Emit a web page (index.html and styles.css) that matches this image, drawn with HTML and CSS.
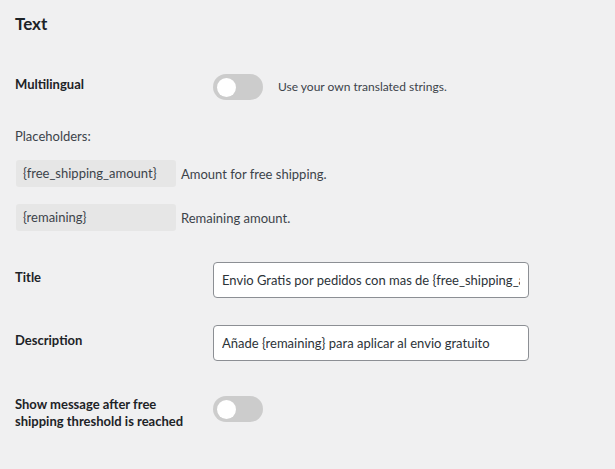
FILE: index.html
```html
<!DOCTYPE html>
<html>
<head>
<meta charset="utf-8">
<link rel="stylesheet" href="styles.css">
</head>
<body>
<div class="page">
  <h2 class="heading">Text</h2>

  <div class="row row-multi">
    <div class="label">Multilingual</div>
    <div class="field">
      <span class="toggle"><span class="knob"></span></span>
      <span class="desc">Use your own translated strings.</span>
    </div>
  </div>

  <div class="ph-title">Placeholders:</div>
  <div class="ph-row ph-first">
    <span class="ph-box">{free_shipping_amount}</span>
    <span class="ph-desc">Amount for free shipping.</span>
  </div>
  <div class="ph-row ph-second">
    <span class="ph-box">{remaining}</span>
    <span class="ph-desc">Remaining amount.</span>
  </div>

  <div class="row row-title">
    <div class="label label-input">Title</div>
    <div class="field">
      <input class="text-input" type="text" value="Envio Gratis por pedidos con mas de {free_shipping_amount}">
    </div>
  </div>

  <div class="row row-desc">
    <div class="label label-input">Description</div>
    <div class="field">
      <input class="text-input" type="text" value="Añade {remaining} para aplicar al envio gratuito">
    </div>
  </div>

  <div class="row row-show">
    <div class="label label-wrap">Show message after free shipping threshold is reached</div>
    <div class="field">
      <span class="toggle"><span class="knob"></span></span>
    </div>
  </div>
</div>
</body>
</html>
```

FILE: styles.css
```css
html, body {
  margin: 0;
  padding: 0;
  background: #f0f0f1;
}
body {
  font-family: Lato, "Liberation Sans", sans-serif;
  color: #1d2327;
  font-size: 13px;
}
.page {
  padding: 0 15px;
}
.heading {
  margin: 0;
  padding-top: 14px;
  height: 20px;
  line-height: 20px;
  font-size: 17px;
  font-weight: 700;
  color: #1d2327;
}
.row {
  display: flex;
  align-items: flex-start;
}
.label {
  width: 198px;
  flex: none;
  box-sizing: border-box;
  padding-right: 10px;
  font-size: 13px;
  font-weight: 700;
  line-height: 18px;
  color: #1d2327;
}
.field {
  display: flex;
  align-items: center;
}
.row-multi {
  margin-top: 40px;
}
.row-multi .label {
  padding-top: 1px;
}
.toggle {
  display: flex;
  align-items: center;
  width: 50px;
  height: 26px;
  border-radius: 13px;
  background: #cccccc;
  box-sizing: border-box;
  padding-left: 4px;
}
.knob {
  width: 19px;
  height: 19px;
  border-radius: 50%;
  background: #ffffff;
}
.desc {
  margin-left: 15px;
  font-size: 12px;
  line-height: 26px;
  color: #3c434a;
}
.ph-title {
  margin-top: 27px;
  line-height: 18px;
  color: #3c434a;
}
.ph-row {
  display: flex;
  align-items: center;
  height: 27px;
}
.ph-first {
  margin-top: 15px;
}
.ph-second {
  margin-top: 17px;
}
.ph-box {
  margin-left: 1px;
  width: 160px;
  height: 27px;
  line-height: 27px;
  box-sizing: border-box;
  padding-left: 7px;
  background: #e6e6e6;
  border-radius: 3px;
  color: #3c434a;
}
.ph-desc {
  margin-left: 5px;
  color: #3c434a;
}
.row-title {
  margin-top: 31px;
}
.row-desc {
  margin-top: 27px;
}
.label-input {
  padding-top: 6px;
}
.text-input {
  width: 316px;
  height: 36px;
  box-sizing: border-box;
  margin: 0;
  padding: 0 8px;
  border: 1px solid #8c8f94;
  border-radius: 4px;
  background: #ffffff;
  font-family: Lato, "Liberation Sans", sans-serif;
  font-size: 13px;
  color: #2c3338;
  outline: none;
}
.row-show {
  margin-top: 35px;
}
.label-wrap {
  line-height: 17px;
}
```
